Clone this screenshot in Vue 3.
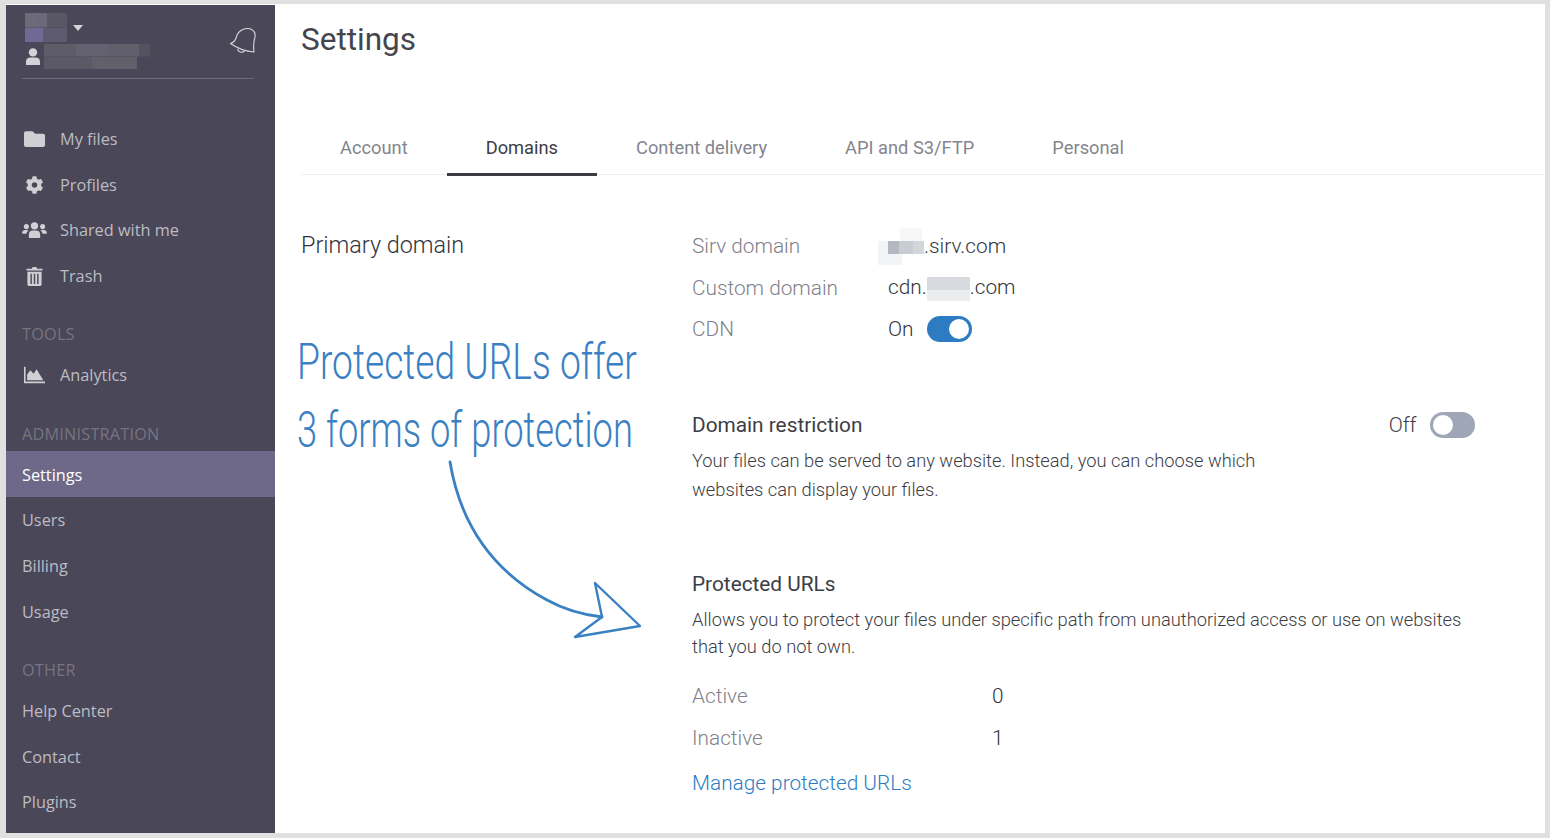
<template>
  <div class="frame">
    <aside class="sidebar">
      <div class="account">
        <div class="account-top">
          <span class="blur blur-name"></span>
          <i class="caret"></i>
        </div>
        <div class="account-user">
          <svg class="user-icon" viewBox="0 0 14 17"><circle cx="7" cy="4.400" r="4.200" /><path d="M0 17v-3.200C0 11 2 9.600 4.400 9.600h5.200c2.400 0 4.400 1.400 4.400 4.200V17z" /></svg>
          <span class="blur blur-user"></span>
        </div>
        <svg class="bell" viewBox="0 0 26 27" fill="none" stroke="#d8d8dc" stroke-width="1.100" stroke-linejoin="round">
          <path d="M.5 16.500C3.500 15.500 5 14 6 11 7 7 9 4 13 2.500 16 1 21 1 23.500 4 25.500 6 25.500 9 24.500 12 23.500 16 23.500 21 24 25 16 24.500 7 21 .5 16.500z" />
          <path d="M8 21.600c-.6 3.200 4 4.800 6.500 2.400" />
        </svg>
      </div>

      <nav class="menu menu-main">
        <a class="item"><svg class="ico ico-folder" viewBox="0 0 512 512"><path d="M464 128H272l-64-64H48C21.490 64 0 85.490 0 112v288c0 26.510 21.490 48 48 48h416c26.510 0 48-21.490 48-48V176c0-26.510-21.490-48-48-48z" /></svg>My files</a>
        <a class="item"><svg class="ico ico-cog" viewBox="0 0 512 512"><path d="M487.400 315.700l-42.600-24.600c4.300-23.200 4.300-47 0-70.200l42.600-24.600c4.900-2.800 7.100-8.600 5.500-14-11.100-35.600-30-67.800-54.700-94.600-3.800-4.100-10-5.100-14.800-2.300L380.800 110c-17.900-15.400-38.500-27.300-60.800-35.100V25.800c0-5.600-3.900-10.500-9.400-11.700-36.700-8.200-74.300-7.800-109.200 0-5.500 1.200-9.400 6.100-9.400 11.700V75c-22.200 7.900-42.800 19.800-60.800 35.100L88.700 85.500c-4.900-2.800-11-1.900-14.800 2.300-24.700 26.700-43.600 58.900-54.700 94.600-1.700 5.400.6 11.200 5.500 14L67.300 221c-4.300 23.200-4.300 47 0 70.200l-42.600 24.600c-4.900 2.800-7.100 8.600-5.500 14 11.100 35.600 30 67.800 54.700 94.600 3.800 4.100 10 5.100 14.800 2.300l42.600-24.600c17.900 15.400 38.500 27.300 60.800 35.100v49.200c0 5.600 3.900 10.500 9.400 11.700 36.700 8.200 74.300 7.800 109.200 0 5.500-1.200 9.400-6.100 9.400-11.700v-49.200c22.200-7.900 42.800-19.800 60.800-35.100l42.600 24.600c4.900 2.800 11 1.900 14.800-2.300 24.700-26.700 43.600-58.900 54.700-94.600 1.500-5.500-.7-11.300-5.600-14.100zM256 336c-44.100 0-80-35.900-80-80s35.900-80 80-80 80 35.900 80 80-35.900 80-80 80z" /></svg>Profiles</a>
        <a class="item"><svg class="ico ico-wide" viewBox="0 0 26 18"><circle cx="13" cy="4.600" r="3.900" /><circle cx="4.400" cy="5.400" r="2.700" /><circle cx="21.600" cy="5.400" r="2.700" /><path d="M7 17.500v-3.700C7 11 8.800 9.500 11 9.500h4c2.200 0 4 1.500 4 4.300v3.700zM0 13v-1.300C0 10 1.300 9 2.800 9h2.600c.5 0 1 .2 1.300.5C5.300 10.300 4.700 11.500 4.500 13zM26 13v-1.300C26 10 24.700 9 23.200 9h-2.600c-.5 0-1 .2-1.300.5 1.400.8 2 2 2.200 3.500z" /></svg>Shared with me</a>
        <a class="item"><svg class="ico ico-trash" viewBox="0 0 18 21"><path d="M.5 2.700h5.700L7 1h4l.8 1.700h5.700v2.100H.5z" /><path fill-rule="evenodd" d="M1.500 6h15v13.500c0 .8-.7 1.500-1.500 1.500H3c-.8 0-1.500-.7-1.500-1.500zM4.700 8v11h1.500V8zm3.550 0v11h1.500V8zm3.550 0v11h1.500V8z" /></svg>Trash</a>
      </nav>

      <div class="group-label group-tools">TOOLS</div>
      <nav class="menu">
        <a class="item"><svg class="ico" viewBox="0 0 20 16"><path d="M0 0h1.500v14.300H20V16H0z" /><path d="M3 13V7.500L6 3.500l3.200 3.300L12 2.500l3 5 3.500 5.500z" /></svg>Analytics</a>
      </nav>

      <div class="group-label group-admin">ADMINISTRATION</div>
      <nav class="menu">
        <a class="item plain active">Settings</a>
        <a class="item plain">Users</a>
        <a class="item plain">Billing</a>
        <a class="item plain">Usage</a>
      </nav>

      <div class="group-label group-other">OTHER</div>
      <nav class="menu">
        <a class="item plain">Help Center</a>
        <a class="item plain">Contact</a>
        <a class="item plain">Plugins</a>
      </nav>
    </aside>

    <main class="main">
      <h1 class="title">Settings</h1>

      <div class="tabs">
        <a v-for="tab in tabs" :key="tab" class="tab" :class="{ current: tab === 'Domains' }">{{ tab }}</a>
      </div>

      <div class="content">
        <h2 class="side-title">Primary domain</h2>

        <div class="details">
          <div class="row">
            <span class="label">Sirv domain</span>
            <span class="value"><span class="blur blur-sirv"></span>.sirv.com</span>
          </div>
          <div class="row">
            <span class="label">Custom domain</span>
            <span class="value">cdn.<span class="blur blur-cdn"></span>.com</span>
          </div>
          <div class="row">
            <span class="label">CDN</span>
            <span class="value toggle-wrap">On <i class="toggle on"></i></span>
          </div>

          <section class="block block-restriction">
            <div class="block-head">
              <h3>Domain restriction</h3>
              <span class="toggle-wrap off-wrap">Off <i class="toggle"></i></span>
            </div>
            <p class="narrow">Your files can be served to any website. Instead, you can choose which websites can display your files.</p>
          </section>

          <section class="block block-protected">
            <h3>Protected URLs</h3>
            <p>Allows you to protect your files under specific path from unauthorized access or use on websites that you do not own.</p>
            <div class="stat stat-active"><span class="label">Active</span><span class="value">0</span></div>
            <div class="stat"><span class="label">Inactive</span><span class="value">1</span></div>
            <a class="manage">Manage protected URLs</a>
          </section>
        </div>
      </div>
    </main>

    <div class="note note-one">Protected URLs offer</div>
    <div class="note note-two">3 forms of protection</div>
    <svg class="arrow" viewBox="0 0 1550 838" fill="none" stroke="#3a80c2" stroke-width="2.800" stroke-linecap="round" stroke-linejoin="round">
      <path d="M450 462C458 510 482 565 547 600 565 610 585 615 602 617" />
      <path d="M602 617 595 583 640 626 575 637z" stroke-width="2.400" />
    </svg>
  </div>
</template>

<script setup>
const tabs = ['Account', 'Domains', 'Content delivery', 'API and S3/FTP', 'Personal']
</script>

<style>
html, body { margin: 0; background: #fff; }
</style>

<style scoped>
.frame {
  position: relative;
  box-sizing: border-box;
  width: 1550px;
  height: 838px;
  display: flex;
  overflow: hidden;
  border: solid #dfe1e1;
  border-width: 4px 5px 5px 6px;
  background: #fff;
  font-family: Roboto, sans-serif;
  color: #3c3c44;
}

.sidebar {
  width: 269px;
  flex: none;
  margin-top: 1px;
  background: #4a4759;
  font-family: "Open Sans", sans-serif;
  font-size: 16.300px;
  color: #bdbcc3;
}
.account {
  position: relative;
  height: 73px;
  margin: 0 21px 0 16px;
  border-bottom: 1px solid #6d6a79;
}
.account-top { display: flex; align-items: center; padding: 8px 0 0 3px; }
.account-user { display: flex; align-items: center; gap: 4px; padding: 2px 0 0 4px; }
.blur { display: inline-block; }
.blur-name {
  width: 42px;
  height: 29px;
  background:
    linear-gradient(90deg, #6e6b78 0 26%, #6b6879 26% 52%, #5a5765 52%) top / 100% 50% no-repeat,
    linear-gradient(90deg, #6e6a94 0 42%, #5f5b6e 42%) bottom / 100% 50% no-repeat;
}
.caret {
  width: 0;
  height: 0;
  margin-left: 6px;
  border: solid transparent;
  border-width: 6px 5.500px 0;
  border-top-color: #d4d4d8;
}
.user-icon { width: 14px; height: 17px; fill: #d3d3d7; }
.blur-user {
  width: 106px;
  height: 25px;
  background:
    linear-gradient(90deg, #5f5c6a 0 30%, #646170 30% 60%, #625f6d 60% 90%, #55525f 90%) top / 100% 50% no-repeat,
    linear-gradient(90deg, #5c5966 0 45%, #61606a 45% 88%, #4a4759 88%) bottom / 100% 50% no-repeat;
}
.bell { position: absolute; right: -2px; top: 22px; width: 26px; height: 27px; }

.menu { display: flex; flex-direction: column; }
.menu-main { margin-top: 37.300px; }
.item {
  box-sizing: border-box;
  display: flex;
  align-items: center;
  height: 45.600px;
  padding-left: 54px;
  position: relative;
}
.item.plain { padding: 2px 0 0 16px; }
.item.active { background: #6e6988; color: #fff; }
.ico { position: absolute; left: 18px; top: 50%; width: 21px; height: 17px; transform: translateY(-50%); fill: #cfcfd4; }
.ico-folder { height: 21px; }
.ico-cog { height: 18px; }
.ico-wide { left: 16px; width: 25px; }
.ico-trash { left: 20px; width: 17px; height: 21px; }

.group-label { padding-left: 16px; color: #77747f; line-height: 20px; letter-spacing: .2px; }
.group-tools { margin-top: 25.700px; margin-bottom: 8px; }
.group-admin { margin-top: 26px; margin-bottom: 7px; }
.group-other { margin-top: 27px; margin-bottom: 7px; }

.main { flex: 1; min-width: 0; padding-left: 26px; }
.title { margin: 16px 0 0; font-size: 31.500px; font-weight: 400; line-height: 40px; color: #44454d; }
.tabs { display: flex; margin-top: 59px; border-bottom: 1px solid #eee; height: 55px; }
.tab {
  box-sizing: border-box;
  height: 57px;
  padding: 0 39px;
  font-size: 18.300px;
  line-height: 58px;
  color: #84858d;
}
.tab.current { color: #3c3d45; border-bottom: 3px solid #3b3b43; }

.content { display: flex; }
.side-title { width: 391px; flex: none; margin: 55px 0 0; font-size: 23.400px; font-weight: 300; line-height: 30px; color: #33343c; }
.details { flex: 1; padding-right: 70px; font-size: 20.800px; font-weight: 300; margin-top: 50.400px; }
.row { display: flex; align-items: center; height: 41.600px; }
.row .label { width: 196px; flex: none; }
.label { color: #80818a; }
.value { color: #33343c; isolation: isolate; }
.blur-sirv { position: relative; width: 36px; height: 13px; vertical-align: -1px; background: linear-gradient(90deg, #b3b7bf 0 30%, #c8ccd3 30% 70%, #d3d6db 70%); }
.blur-sirv::before {
  content: "";
  position: absolute;
  left: -10px;
  top: 0;
  width: 24px;
  height: 24px;
  z-index: -1;
  background: #f3f4f5;
}
.blur-sirv::after {
  content: "";
  position: absolute;
  left: 12px;
  top: -13px;
  width: 22px;
  height: 13px;
  background: #f6f7f8;
}
.blur-cdn { width: 43px; height: 24px; vertical-align: -7px; background: linear-gradient(180deg, #d7dade 0 54%, #ecedef 54%); }
.toggle-wrap { display: inline-flex; align-items: center; gap: 13px; }
.toggle {
  position: relative;
  box-sizing: border-box;
  width: 45.500px;
  height: 26px;
  border-radius: 13px;
  background: #9fa6b5;
}
.toggle::after {
  content: "";
  position: absolute;
  left: 3px;
  top: 3px;
  width: 20px;
  height: 20px;
  border-radius: 50%;
  background: #fff;
}
.toggle.on { background: #2d7cc1; }
.toggle.on::after { left: 22.500px; }

.block h3 { margin: 0; font-size: 20.800px; font-weight: 400; line-height: 26px; color: #3c3d45; }
.block p { margin: 0; font-size: 18.300px; line-height: 27px; color: #3c3c44; }
.block-restriction { margin-top: 62px; }
.block-head { display: flex; justify-content: space-between; align-items: center; height: 26px; margin-bottom: 9px; }
.off-wrap { color: #3c3c44; font-weight: 300; }
.block .narrow { width: 590px; line-height: 28.500px; }
.block-protected { margin-top: 67px; }
.block-protected h3 { margin-bottom: 9px; }
.stat { display: flex; align-items: center; height: 42px; }
.stat .label { width: 300px; }
.stat-active { margin-top: 15px; }
.manage { display: block; margin-top: 11px; color: #2d7cc1; line-height: 26px; }

.note {
  position: absolute;
  left: 291px;
  font-size: 50px;
  font-weight: 300;
  line-height: 60px;
  white-space: nowrap;
  color: #3a80c2;
  transform-origin: 0 0;
}
.note-one { top: 328px; transform: scaleX(.744); }
.note-two { top: 396px; transform: scaleX(.726); }
.arrow { position: absolute; left: -6px; top: -4px; width: 1550px; height: 838px; pointer-events: none; }
</style>
